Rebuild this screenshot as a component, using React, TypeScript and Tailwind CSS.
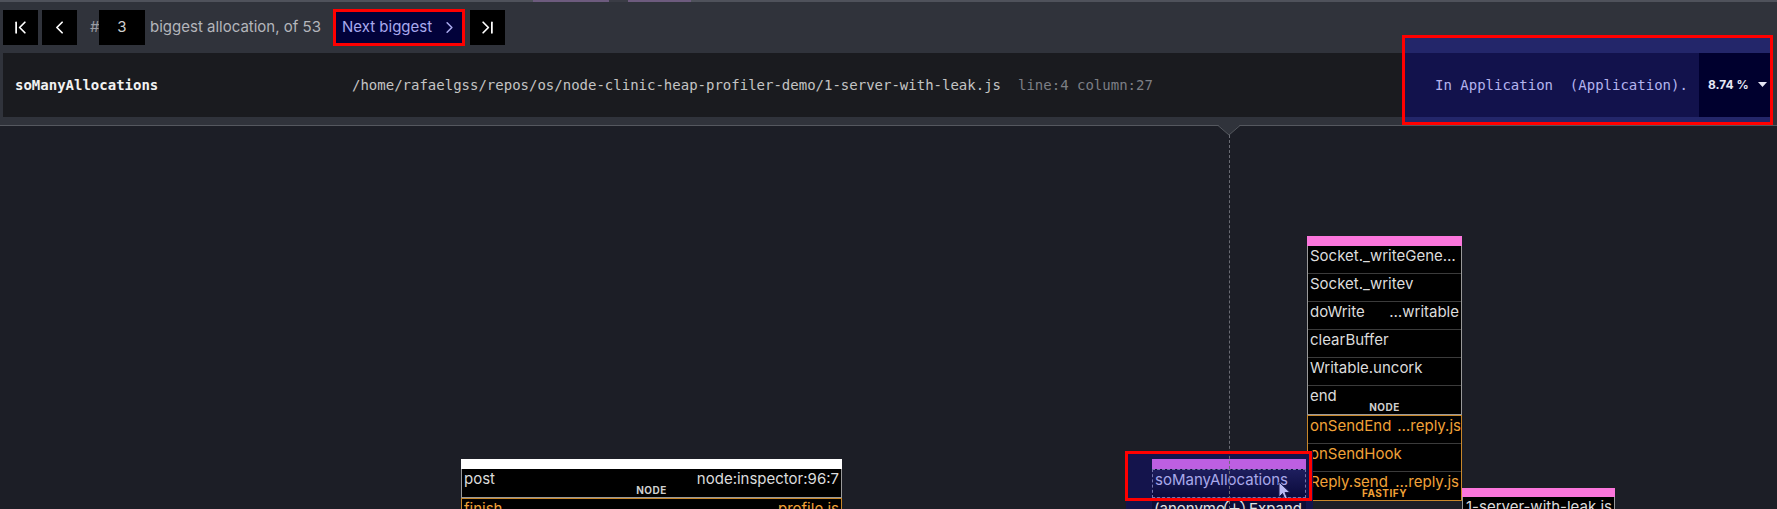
import { ChevronFirst, ChevronLast, ChevronLeft, ChevronRight } from "lucide-react";

type Row = { name: string; file?: string; label?: string };

const nodeRows: Row[] = [
  { name: "Socket._writeGene…" },
  { name: "Socket._writev" },
  { name: "doWrite", file: "…writable" },
  { name: "clearBuffer" },
  { name: "Writable.uncork" },
  { name: "end", label: "NODE" },
];

const fastifyRows: Row[] = [
  { name: "onSendEnd", file: "…reply.js" },
  { name: "onSendHook" },
  { name: "Reply.send", file: "…reply.js", label: "FASTIFY" },
];

// one frame row in a stack, 28px tall with a thin separator
function FrameRow({ row, tone }: { row: Row; tone: "node" | "fastify" }) {
  const text = tone === "node" ? "text-[#dcdcdc]" : "text-[#f0a238]";
  const label = tone === "node" ? "text-[#cfcfcf]" : "text-[#f0a238]";
  return (
    <div className="relative h-[28px] border-b border-[#3b3b3b] bg-black last:border-b-0">
      <div className={`flex justify-between gap-[6px] px-[2px] text-[15px] leading-[20px] whitespace-nowrap ${text}`}>
        <span>{row.name}</span>
        {row.file && <span>{row.file}</span>}
      </div>
      {row.label && (
        <div className={`absolute inset-x-0 bottom-[1px] text-center text-[10px] font-bold leading-[11px] tracking-[0.5px] ${label}`}>
          {row.label}
        </div>
      )}
    </div>
  );
}

function Cursor() {
  return (
    <svg width="14" height="20" viewBox="0 0 14 20">
      <path
        d="M1 1 L1 16 L4.5 12.5 L7 18.5 L9.5 17.5 L7 11.5 L12 11.5 Z"
        fill="#b9b9f2"
        stroke="#1c1c50"
        strokeWidth="1"
        strokeLinejoin="round"
      />
    </svg>
  );
}

export default function App() {
  return (
    <div className="relative flex h-[509px] w-[1777px] flex-col overflow-hidden bg-[#1c1e26] font-['Inter',sans-serif]">
      {/* header */}
      <div className="relative bg-[#30333b]">
        {/* minimap brush strip */}
        <div className="flex h-[2px] bg-[#4f525b]">
          <div className="w-[533px]" />
          <div className="w-[76px] bg-[#6d5b7e]" />
          <div className="w-[19px] bg-[#3a3c45]" />
          <div className="w-[63px] bg-[#6d5b7e]" />
        </div>

        {/* toolbar */}
        <div className="mt-[8px] flex h-[35px] items-center pl-[3px] text-[15px]">
          <button className="grid h-[35px] w-[35px] place-items-center bg-black text-white">
            <ChevronFirst size={21} strokeWidth={2} />
          </button>
          <button className="ml-[4px] grid h-[35px] w-[35px] place-items-center bg-black text-white">
            <ChevronLeft size={21} strokeWidth={2} />
          </button>
          <span className="ml-[13px] w-[7px] text-[#9a9ca3]">#</span>
          <div className="ml-[2px] grid h-[35px] w-[46px] place-items-center bg-black text-[#d0d0d0]">3</div>
          <span className="ml-[5px] w-[174px] whitespace-nowrap text-[#b4b6bc]">biggest allocation, of 53</span>
          <button className="relative ml-[10px] flex h-[35px] w-[130px] items-center bg-[#02023a] pl-[8px] text-[#a9a9ee]">
            <span>Next biggest</span>
            <ChevronRight size={19} strokeWidth={2} className="ml-auto mr-[5px]" />
            <span className="pointer-events-none absolute -inset-[1px] border-[3px] border-[#ff0000]" />
          </button>
          <button className="ml-[6px] grid h-[35px] w-[35px] place-items-center bg-black text-white">
            <ChevronLast size={21} strokeWidth={2} />
          </button>
        </div>

        {/* highlight band behind the selected-area info */}
        <div className="absolute left-[1404px] top-[37px] h-[86px] w-[368px] bg-[#23266a]" />

        {/* info bar */}
        <div className="relative ml-[3px] mt-[8px] flex h-[64px] w-[1769px] items-center bg-[#1a1b1f] font-['DejaVu_Sans_Mono',monospace] text-[14px]">
          <div className="w-[349px] pl-[12px] font-bold text-[#f2f2f2]">soManyAllocations</div>
          <span className="whitespace-nowrap text-[#c4c4c4]">
            /home/rafaelgss/repos/os/node-clinic-heap-profiler-demo/1-server-with-leak.js
          </span>
          <span className="ml-[17px] whitespace-nowrap text-[#7d7f85]">line:4 column:27</span>
          <div className="ml-auto flex h-full">
            <div className="flex w-[295px] items-center bg-[#12124c] pl-[31px] whitespace-pre text-[#b4b4ee]">
              In Application  (Application).
            </div>
            <div className="flex w-[73px] items-center bg-[#00002e] pl-[9px] font-['Inter',sans-serif] text-[12px] font-bold text-[#e6e6f4]">
              <span>8.74 %</span>
              <svg width="9" height="6" viewBox="0 0 9 6" className="ml-[9px]">
                <path d="M0 0 H9 L4.5 5 Z" fill="#e6e6f4" />
              </svg>
            </div>
          </div>
        </div>

        <div className="h-[8px]" />
        <div className="relative h-[1px] bg-[#55585f]">
          <svg width="22" height="12" viewBox="0 0 22 12" className="absolute left-[1218px] top-0">
            <path d="M0 0 L11 10 L22 0 Z" fill="#30333b" />
            <path d="M0 0.5 L11 10 L22 0.5" fill="none" stroke="#55585f" strokeWidth="1" />
          </svg>
        </div>

        {/* red annotation box on the right */}
        <div className="pointer-events-none absolute left-[1402px] top-[35px] z-20 h-[90px] w-[371px] border-[3px] border-[#ff0000]" />
      </div>

      {/* flame graph canvas */}
      <div className="relative flex-1">
        {/* post stack */}
        <div className="absolute left-[461px] top-[333px] w-[381px]">
          <div className="h-[10px] bg-white" />
          <div className="border border-t-0 border-[#9a9a9a]">
            <FrameRow row={{ name: "post", file: "node:inspector:96:7", label: "NODE" }} tone="node" />
          </div>
          <div className="border border-[#c8872a]">
            <FrameRow row={{ name: "finish", file: "profile.js" }} tone="fastify" />
          </div>
        </div>

        {/* tall stack */}
        <div className="absolute left-[1307px] top-[110px] w-[155px]">
          <div className="h-[10px] bg-[#fb76dc]" />
          <div className="border border-t-0 border-[#9a9a9a]">
            {nodeRows.map((r) => (
              <FrameRow key={r.name} row={r} tone="node" />
            ))}
          </div>
          <div className="border border-[#c8872a]">
            {fastifyRows.map((r) => (
              <FrameRow key={r.name} row={r} tone="fastify" />
            ))}
          </div>
        </div>

        {/* 1-server-with-leak stack */}
        <div className="absolute left-[1462px] top-[362px] w-[153px]">
          <div className="h-[9px] bg-[#fb76dc]" />
          <div className="flex h-[28px] justify-end border border-t-0 border-[#9a9a9a] bg-black px-[2px]">
            <span className="whitespace-nowrap text-[15px] leading-[20px] text-[#dcdcdc]">1-server-with-leak.js</span>
          </div>
        </div>

        {/* selected frame */}
        <div className="absolute left-[1126px] top-[325px] h-[70px] w-[187px] bg-[#14144c]" />
        <div className="absolute left-[1152px] top-[333px] w-[154px]">
          <div className="h-[10px] bg-[#bd5fe2]" />
          <div className="h-[29px] border border-dashed border-[#7474ad] bg-gradient-to-b from-[#1e1e5e] to-[#0b0b3c] px-[2px] text-[15px] leading-[20px] text-[#a9a9ea]">
            soManyAllocations
          </div>
          <div className="relative h-[28px] overflow-hidden bg-[#0d0d36] px-[2px] pt-[1px] text-[15px] leading-[20px] whitespace-nowrap text-[#e2e2e2]">
            <span>(anonymous)</span>
            <span className="absolute right-[4px] top-[1px] bg-[#0d0d36]">⊕ Expand</span>
          </div>
        </div>

        {/* selection guide */}
        <div className="absolute bottom-0 left-[1229px] top-[9px] z-10 border-l border-dashed border-[#6a6c74]" />

        <div className="absolute left-[1278px] top-[355px] z-10">
          <Cursor />
        </div>

        <div className="pointer-events-none absolute left-[1125px] top-[325px] z-20 h-[50px] w-[187px] border-[3px] border-[#ff0000]" />
      </div>
    </div>
  );
}
